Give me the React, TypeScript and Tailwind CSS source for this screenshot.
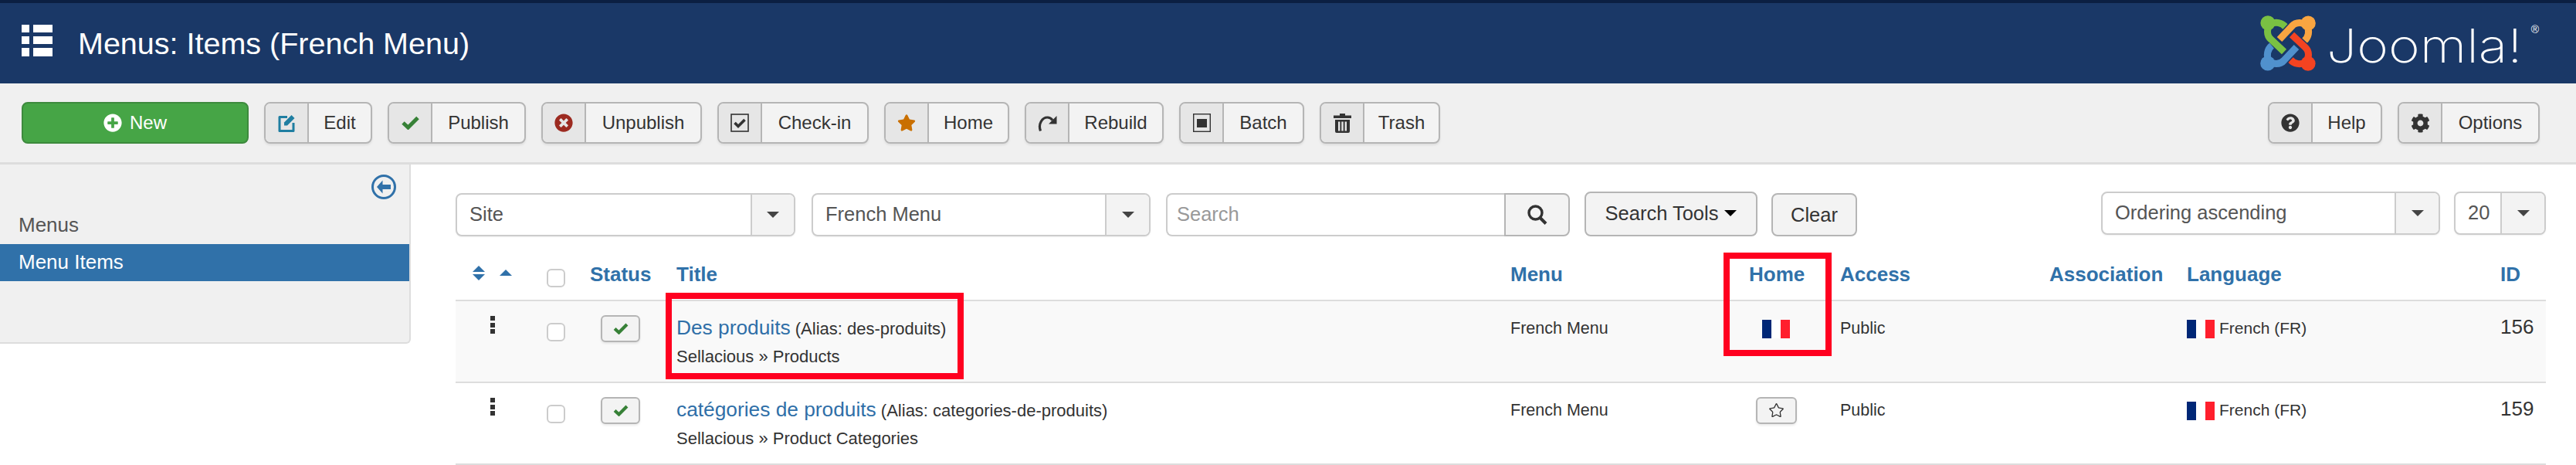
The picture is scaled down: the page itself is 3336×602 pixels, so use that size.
import React from 'react';
import { FaCog, FaQuestionCircle, FaPlusCircle, FaStar, FaTimesCircle } from 'react-icons/fa';
import { Star } from 'lucide-react';

const font = { fontFamily: '"Liberation Sans", Arial, sans-serif' };

function GridIcon() {
  return (
    <svg width="40" height="41" viewBox="0 0 40 41" fill="#fff">
      <rect x="0" y="0" width="10" height="10" />
      <rect x="15" y="0" width="25" height="10" />
      <rect x="0" y="15" width="10" height="10" />
      <rect x="15" y="15" width="25" height="10" />
      <rect x="0" y="30" width="10" height="11" />
      <rect x="15" y="30" width="25" height="11" />
    </svg>
  );
}

function JoomlaMark() {
  const arm = 'M33 15 C28 9 20 8 14 11 C8 16 8 26 14 31 L31 47';
  const pieces = [
    { color: '#7ac143', rotate: 0 },
    { color: '#f9a541', rotate: 90 },
    { color: '#f44321', rotate: 180 },
    { color: '#5091cd', rotate: 270 },
  ];
  return (
    <svg width="72" height="72" viewBox="0 0 72 72" fill="none">
      {pieces.map((p) => (
        <g key={p.color} transform={`rotate(${p.rotate} 36 36)`}>
          <path d={arm} stroke="#1a3867" strokeWidth="12" />
          <path d={arm} stroke={p.color} strokeWidth="9" />
          <circle cx="10" cy="9.8" r="9.6" fill={p.color} />
        </g>
      ))}
    </svg>
  );
}

function EditIcon() {
  return (
    <svg width="23" height="24" viewBox="0 0 23 24" fill="none">
      <path d="M12 4.5H2v18h18V12" stroke="#1f7ea1" strokeWidth="3" strokeLinejoin="round" />
      <path d="M8 11.5 L17.5 2 L21.5 6 L12 15.5 H8 Z" fill="#1f7ea1" />
    </svg>
  );
}

function CheckIcon({ w = 23, h = 18 }: { w?: number; h?: number }) {
  return (
    <svg width={w} height={h} viewBox="0 0 23 18" fill="none">
      <path d="M2 9 L8.5 15 L21 2.5" stroke="#378137" strokeWidth="5" />
    </svg>
  );
}

function CheckInIcon() {
  return (
    <svg width="24" height="24" viewBox="0 0 24 24" fill="none">
      <rect x="1" y="1" width="22" height="22" stroke="#333" strokeWidth="1.6" />
      <path d="M5.5 12 L10 16.5 L18.5 8" stroke="#333" strokeWidth="3.6" />
    </svg>
  );
}

function RebuildIcon() {
  return (
    <svg width="25" height="21" viewBox="0 0 25 21" fill="none">
      <path d="M3.5 20.5 C0 11 6 3 12.5 3 C15.5 3 17.5 4.5 19 6.5" stroke="#333" strokeWidth="3.2" />
      <path d="M24.5 1 V11.5 H14 Z" fill="#333" />
    </svg>
  );
}

function BatchIcon() {
  return (
    <svg width="23" height="24" viewBox="0 0 23 24" fill="none">
      <rect x="0.7" y="0.7" width="21.6" height="22.6" stroke="#333" strokeWidth="1.4" />
      <rect x="5" y="7" width="13" height="11" fill="#333" />
    </svg>
  );
}

function TrashIcon() {
  return (
    <svg width="23" height="25" viewBox="0 0 23 25" fill="#333">
      <path d="M8 0h7v2.5h8V6H0V2.5h8z" />
      <path d="M2 8h19v15a2 2 0 0 1-2 2H4a2 2 0 0 1-2-2z M6 10.5v12h2.4v-12z M10.3 10.5v12h2.4v-12z M14.6 10.5v12H17v-12z" fillRule="evenodd" />
    </svg>
  );
}

function SearchIcon() {
  return (
    <svg width="26" height="26" viewBox="0 0 26 26" fill="none">
      <circle cx="10.5" cy="10.5" r="8.5" stroke="#333" strokeWidth="3.4" />
      <path d="M16.5 17 L24 24.5" stroke="#333" strokeWidth="4" />
    </svg>
  );
}

function BackIcon() {
  return (
    <svg width="32" height="32" viewBox="0 0 32 32" fill="none">
      <circle cx="16" cy="16" r="14.5" stroke="#3071a9" strokeWidth="3" />
      <path d="M14.5 7.5 L7 16 L14.5 24.5 V19 H25 V13 H14.5 Z" fill="#3071a9" />
    </svg>
  );
}

function Flag() {
  return (
    <div className="flex h-6 w-9 shrink-0">
      <div className="w-3 bg-[#002776]" />
      <div className="w-3 bg-white" />
      <div className="w-3 bg-[#ff1f2d]" />
    </div>
  );
}

function ToolButton({ label, icon, width }: { label: string; icon: React.ReactNode; width: string }) {
  return (
    <div className={`flex h-[54px] shrink-0 overflow-hidden rounded-lg border-2 border-[#b5b5b5] bg-[#f3f3f3] shadow-[0_2px_3px_rgba(0,0,0,0.08)] ${width}`}>
      <div className="flex w-[56px] shrink-0 items-center justify-center border-r-2 border-[#b5b5b5] bg-[#e6e6e6]">{icon}</div>
      <div className="flex flex-1 items-center justify-center text-[24px] text-[#333]">{label}</div>
    </div>
  );
}

function Caret({ className }: { className: string }) {
  return <div className={`h-0 w-0 border-x-[8px] border-t-[8px] border-x-transparent ${className}`} />;
}

function SelectBox({ label, boxClass, arrowClass }: { label: string; boxClass: string; arrowClass: string }) {
  return (
    <div className={`flex h-[56px] shrink-0 overflow-hidden rounded-lg border-2 border-[#ccc] bg-white shadow-[0_1px_2px_rgba(0,0,0,0.06)] ${boxClass}`}>
      <div className="flex min-w-0 flex-1 items-center pl-[16px] pb-[2px] text-[25.5px] text-[#555]">{label}</div>
      <div className={`flex items-center justify-center border-l-2 border-[#ccc] bg-[#f3f3f3] ${arrowClass}`}>
        <Caret className="border-t-[#444]" />
      </div>
    </div>
  );
}

const gridCols = 'grid grid-cols-[118px_56px_112px_1080px_276px_151px_271px_178px_406px_59px]';

function HeaderCell({ children, className = '' }: { children: React.ReactNode; className?: string }) {
  return <div className={`pt-[34px] text-[26px] font-bold leading-[30px] text-[#3071a9] ${className}`}>{children}</div>;
}

function Checkbox() {
  return <div className="h-6 w-6 rounded-md border-2 border-[#ccc] bg-white" />;
}

type Item = { title: string; alias: string; path: string; id: number; home: boolean; striped: boolean };

const items: Item[] = [
  { title: 'Des produits', alias: 'des-produits', path: 'Sellacious » Products', id: 156, home: true, striped: true },
  { title: 'catégories de produits', alias: 'categories-de-produits', path: 'Sellacious » Product Categories', id: 159, home: false, striped: false },
];

function Row({ item }: { item: Item }) {
  return (
    <div className={`${gridCols} h-[106px] border-b-2 border-[#ddd] text-[21.5px] leading-[30px] text-[#333] ${item.striped ? 'bg-[#f9f9f9]' : 'bg-white'}`}>
      <div className="flex flex-col gap-[2.5px] pl-[45px] pt-[19px]">
        <div className="h-[6px] w-[6px] bg-[#333]" />
        <div className="h-[6px] w-[6px] bg-[#333]" />
        <div className="h-[6px] w-[6px] bg-[#333]" />
      </div>
      <div className="pt-[28px]"><Checkbox /></div>
      <div className="pt-[18px] pl-[14px]">
        <div className="flex h-[35px] w-[51px] items-center justify-center rounded-md border-2 border-[#b5b5b5] bg-[#f3f3f3] shadow-[0_2px_3px_rgba(0,0,0,0.08)]">
          <CheckIcon w={20} h={15} />
        </div>
      </div>
      <div className="pt-[19px]">
        <div className="whitespace-nowrap text-[22px]">
          <span className="text-[26.3px] text-[#2f6fa8]">{item.title}</span> (Alias: {item.alias})
        </div>
        <div className="mt-[6px] text-[22px]">{item.path}</div>
      </div>
      <div className="pt-[20px]">French Menu</div>
      <div className={item.home ? 'pl-[50px] pt-[24px]' : 'pl-[42px] pt-[18px]'}>
        {item.home ? (
          <Flag />
        ) : (
          <div className="flex h-[35px] w-[53px] items-center justify-center rounded-md border-2 border-[#b5b5b5] bg-[#f3f3f3] shadow-[0_2px_3px_rgba(0,0,0,0.08)]">
            <Star size={21} strokeWidth={1.5} color="#333" />
          </div>
        )}
      </div>
      <div className="pt-[20px]">Public</div>
      <div />
      <div className="flex gap-[6px] pt-[24px]">
        <Flag />
        <span className="-mt-1 text-[21px]">French (FR)</span>
      </div>
      <div className="pt-[18px] text-[26px]">{item.id}</div>
    </div>
  );
}

export default function App() {
  return (
    <div className="flex h-[602px] w-[3336px] flex-col overflow-hidden bg-white" style={font}>
      {/* Header */}
      <header className="flex h-[108px] shrink-0 items-start border-t-4 border-[#0b1f42] bg-[#1a3867] pl-[28px] pr-[48px]">
        <div className="mt-[28px]"><GridIcon /></div>
        <h1 className="ml-[33px] mt-[28px] text-[39.5px] leading-[48px] text-white">Menus: Items (French Menu)</h1>
        <div className="ml-auto mt-[16px] flex">
          <JoomlaMark />
          <div className="ml-[14px] mt-[4px] w-[265px] origin-left scale-x-[1.16] whitespace-nowrap text-[60px] font-extralight leading-[70px] text-white" style={{ fontFamily: 'Inter, sans-serif' }}>
            Joomla!
          </div>
          <div className="mt-[10px] text-[14px] leading-4 text-white">®</div>
        </div>
      </header>

      {/* Toolbar */}
      <div className="flex h-[105px] shrink-0 items-start gap-[20px] border-b-[3px] border-[#ddd] bg-[#f0f0f0] pl-[28px] pr-[47px] pt-[24px]">
        <div className="flex h-[54px] w-[294px] items-center justify-center gap-[10px] rounded-lg border-2 border-[#3d8a3d] bg-[#46a546] text-[24px] text-white">
          <FaPlusCircle size={24} />
          New
        </div>
        <ToolButton width="w-[140px]" label="Edit" icon={<EditIcon />} />
        <ToolButton width="w-[179px]" label="Publish" icon={<CheckIcon />} />
        <ToolButton width="w-[208px]" label="Unpublish" icon={<FaTimesCircle size={24} color="#9c2a20" />} />
        <ToolButton width="w-[196px]" label="Check-in" icon={<CheckInIcon />} />
        <ToolButton width="w-[162px]" label="Home" icon={<FaStar size={24} color="#c96f00" />} />
        <ToolButton width="w-[180px]" label="Rebuild" icon={<RebuildIcon />} />
        <ToolButton width="w-[162px]" label="Batch" icon={<BatchIcon />} />
        <ToolButton width="w-[156px]" label="Trash" icon={<TrashIcon />} />
        <div className="ml-auto"><ToolButton width="w-[148px]" label="Help" icon={<FaQuestionCircle size={24} color="#333" />} /></div>
        <ToolButton width="w-[184px]" label="Options" icon={<FaCog size={25} color="#333" />} />
      </div>

      <div className="flex min-h-0 flex-1">
        {/* Sidebar */}
        <aside className="h-[232px] w-[532px] shrink-0 rounded-br-md border-b-2 border-r-2 border-[#ddd] bg-[#f0f0f0] pt-[13px]">
          <div className="flex justify-end pr-[17px]"><BackIcon /></div>
          <div className="mt-[10px] flex h-12 items-center pb-[2px] pl-[24px] text-[26px] text-[#555]">Menus</div>
          <div className="flex h-12 items-center bg-[#3071a9] pb-[2px] pl-[24px] text-[26px] text-white">Menu Items</div>
        </aside>

        {/* Content */}
        <main className="min-w-0 flex-1 pl-[58px] pr-[39px] pt-[35px]">
          <div className="flex h-[58px] items-start">
            <SelectBox label="Site" boxClass="mt-[2px] w-[440px]" arrowClass="w-[56px]" />
            <SelectBox label="French Menu" boxClass="ml-[21px] mt-[2px] w-[439px]" arrowClass="w-[57px]" />
            <div className="ml-[20px] mt-[2px] flex h-[56px] w-[438px] items-center rounded-l-lg border-2 border-r-0 border-[#ccc] bg-white pb-[2px] pl-[12px] text-[25.5px] text-[#999]">Search</div>
            <div className="mt-[2px] flex h-[56px] w-[85px] items-center justify-center rounded-r-lg border-2 border-[#b5b5b5] bg-[#f3f3f3]"><SearchIcon /></div>
            <div className="ml-[19px] flex h-[58px] w-[224px] items-center justify-center gap-[8px] rounded-lg border-2 border-[#b5b5b5] bg-[#f3f3f3] pb-[2px] text-[25.5px] text-[#333]">
              Search Tools
              <Caret className="border-t-black" />
            </div>
            <div className="ml-[18px] mt-[2px] flex h-[56px] w-[111px] items-center justify-center rounded-lg border-2 border-[#b5b5b5] bg-[#f3f3f3] text-[25.5px] text-[#333]">Clear</div>
            <SelectBox label="Ordering ascending" boxClass="ml-auto w-[439px]" arrowClass="w-[57px]" />
            <SelectBox label="20" boxClass="ml-[18px] w-[119px]" arrowClass="w-[57px]" />
          </div>

          {/* Table */}
          <div className="relative">
            <div className={`${gridCols} h-[84px] border-b-2 border-[#ddd]`}>
              <div className="flex items-start gap-[19px] pl-[22px] pt-[38px]">
                <div className="flex flex-col gap-[3px]">
                  <div className="h-0 w-0 border-x-[8px] border-b-[8px] border-x-transparent border-b-[#3071a9]" />
                  <div className="h-0 w-0 border-x-[8px] border-t-[8px] border-x-transparent border-t-[#3071a9]" />
                </div>
                <div className="mt-[5px] h-0 w-0 border-x-[8px] border-b-[8px] border-x-transparent border-b-[#3071a9]" />
              </div>
              <div className="pt-[42px]"><Checkbox /></div>
              <HeaderCell>Status</HeaderCell>
              <HeaderCell>Title</HeaderCell>
              <HeaderCell>Menu</HeaderCell>
              <HeaderCell className="pl-[33px]">Home</HeaderCell>
              <HeaderCell>Access</HeaderCell>
              <HeaderCell>Association</HeaderCell>
              <HeaderCell>Language</HeaderCell>
              <HeaderCell>ID</HeaderCell>
            </div>
            {items.map((item) => (
              <Row key={item.id} item={item} />
            ))}

            {/* Red annotation boxes drawn over the table */}
            <div className="absolute left-[272px] top-[73px] h-[112px] w-[386px] border-8 border-[#ff0020]" />
            <div className="absolute left-[1642px] top-[21px] h-[134px] w-[140px] border-8 border-[#ff0020]" />
          </div>
        </main>
      </div>
    </div>
  );
}
